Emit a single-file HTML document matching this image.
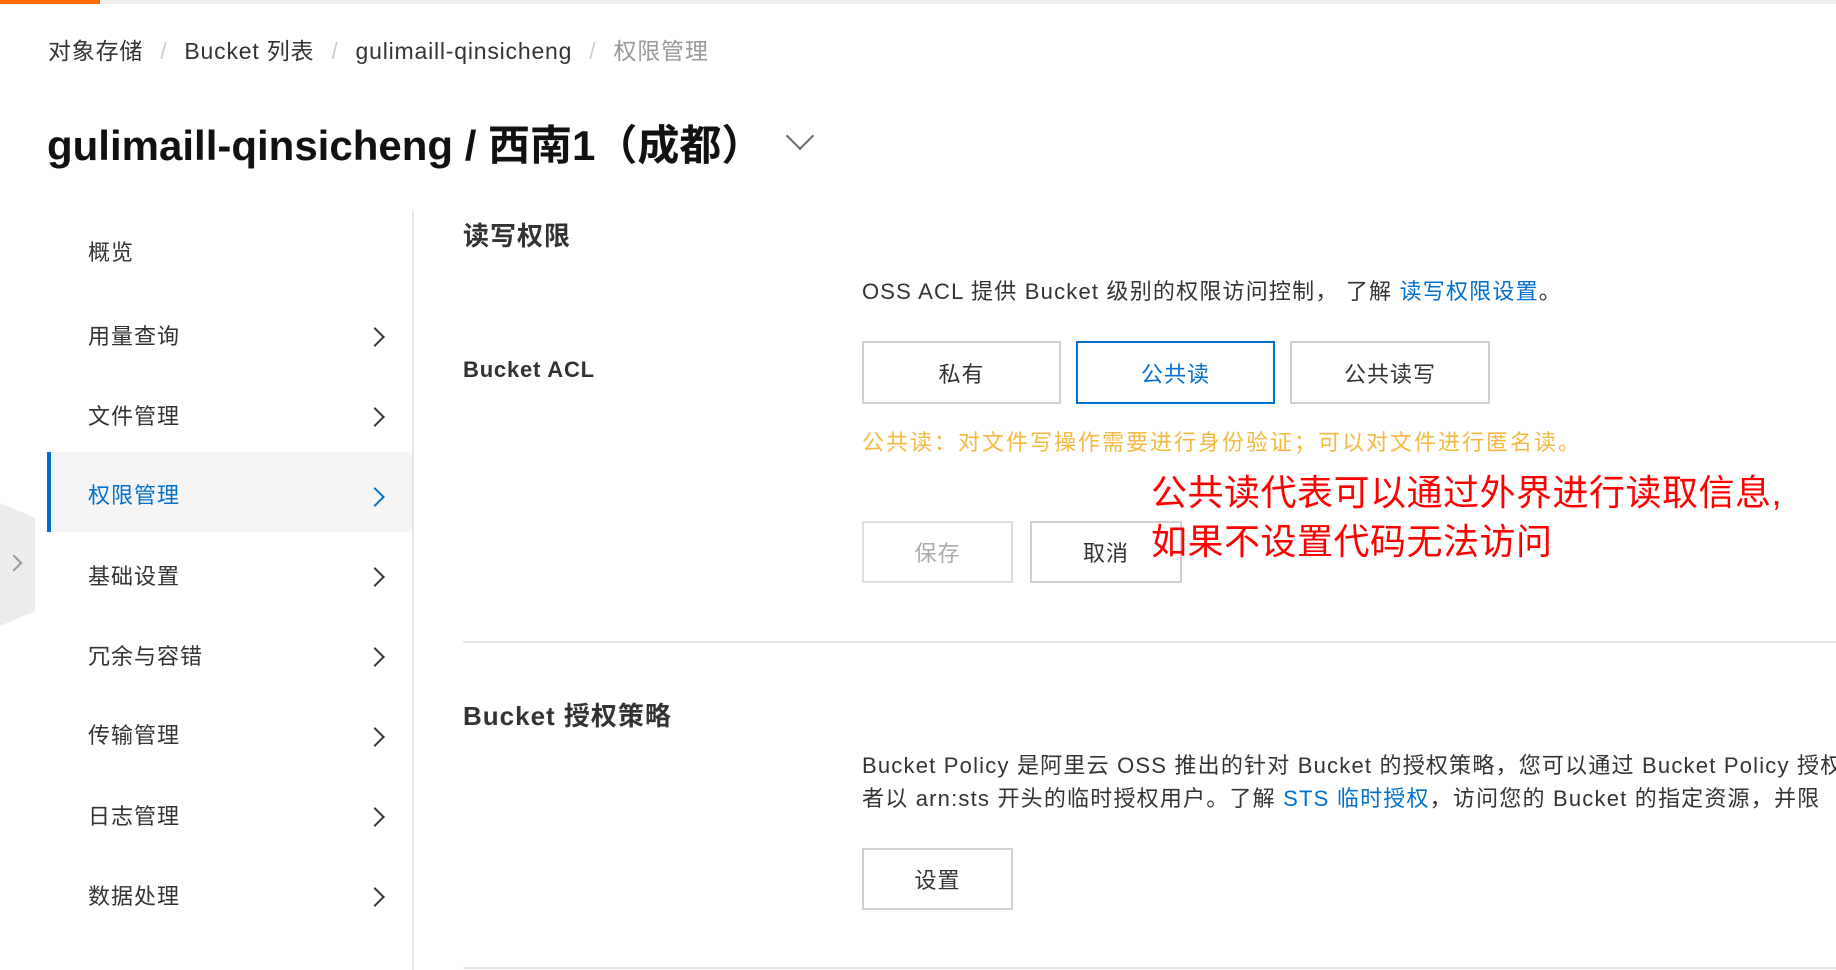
<!DOCTYPE html>
<html><head><meta charset="utf-8"><style>
*{margin:0;padding:0;box-sizing:border-box}
body{width:1836px;height:970px;overflow:hidden;background:#fff;font-family:"Liberation Sans","Noto Sans CJK SC",sans-serif;color:#333;position:relative}
.a{position:absolute;white-space:nowrap}
.bc{font-size:23px;top:32px;color:#333;letter-spacing:0.8px}
.bc .s{color:#ccc;margin:0 17px}
.menu{left:88px;font-size:22px;color:#333;line-height:30px;letter-spacing:1px}
.chev{position:absolute;left:368px;width:14px;height:14px;border-right:2.5px solid #333;border-top:2.5px solid #333;transform:rotate(45deg)}
.btn{position:absolute;border:2px solid #d0d0d0;font-size:22px;display:flex;align-items:center;justify-content:center;color:#333;background:#fff;letter-spacing:1px}
.t{letter-spacing:1.2px}
</style></head><body>
<div class="a" style="left:0;top:0;width:1836px;height:4px;background:#eee"></div>
<div class="a" style="left:0;top:0;width:100px;height:4px;background:#ff6a00"></div>
<div class="a bc" style="left:48px">对象存储<span class="s">/</span>Bucket 列表<span class="s">/</span>gulimaill-qinsicheng<span class="s">/</span><span style="color:#999">权限管理</span></div>
<div class="a" style="left:47px;top:112px;font-size:42px;font-weight:bold;color:#111">gulimaill-qinsicheng / 西南1（成都）</div>
<div class="a" style="left:790px;top:126px;width:20px;height:20px;border-right:2.5px solid #666;border-bottom:2.5px solid #666;transform:rotate(45deg)"></div>

<div class="a" style="left:412px;top:211px;width:2px;height:759px;background:#e5e5e5"></div>
<div class="a" style="left:47px;top:452px;width:365px;height:80px;background:#f5f5f5;border-left:4px solid #0070cc"></div>
<div class="a" style="left:0;top:503px;width:35px;height:123px;background:#ececec;clip-path:polygon(0 0,100% 12%,100% 88%,0 100%)"></div>
<div class="a" style="left:8px;top:557px;width:12px;height:12px;border-right:2px solid #999;border-top:2px solid #999;transform:rotate(45deg)"></div>

<div class="a menu" style="top:238px">概览</div>
<div class="a menu" style="top:322px">用量查询</div><div class="chev" style="top:330px"></div>
<div class="a menu" style="top:402px">文件管理</div><div class="chev" style="top:410px"></div>
<div class="a menu" style="top:481px;color:#0070cc">权限管理</div><div class="chev" style="top:490px;border-color:#0070cc"></div>
<div class="a menu" style="top:562px">基础设置</div><div class="chev" style="top:570px"></div>
<div class="a menu" style="top:642px">冗余与容错</div><div class="chev" style="top:650px"></div>
<div class="a menu" style="top:721px">传输管理</div><div class="chev" style="top:730px"></div>
<div class="a menu" style="top:802px">日志管理</div><div class="chev" style="top:810px"></div>
<div class="a menu" style="top:882px">数据处理</div><div class="chev" style="top:890px"></div>

<div class="a" style="left:463px;top:216px;font-size:26px;font-weight:bold;letter-spacing:1px">读写权限</div>
<div class="a t" style="left:862px;top:274px;font-size:22px">OSS ACL 提供 Bucket 级别的权限访问控制， 了解 <span style="color:#0070cc">读写权限设置</span>。</div>
<div class="a" style="left:463px;top:357px;font-size:22px;font-weight:bold;letter-spacing:0.8px">Bucket ACL</div>
<div class="btn" style="left:862px;top:341px;width:199px;height:63px">私有</div>
<div class="btn" style="left:1076px;top:341px;width:199px;height:63px;border-color:#0070cc;color:#0070cc">公共读</div>
<div class="btn" style="left:1290px;top:341px;width:200px;height:63px">公共读写</div>
<div class="a" style="left:862px;top:425px;font-size:22px;color:#f5b942;letter-spacing:2px">公共读：对文件写操作需要进行身份验证；可以对文件进行匿名读。</div>
<div class="btn" style="left:862px;top:521px;width:151px;height:62px;color:#aaa;border-color:#ddd">保存</div>
<div class="btn" style="left:1030px;top:521px;width:152px;height:62px">取消</div>
<div class="a" style="left:1151px;top:468px;font-size:36px;color:#f00;line-height:49px;letter-spacing:0.5px">公共读代表可以通过外界进行读取信息,<br>如果不设置代码无法访问</div>

<div class="a" style="left:463px;top:641px;width:1373px;height:2px;background:#e5e5e5"></div>
<div class="a" style="left:463px;top:696px;font-size:26px;font-weight:bold;letter-spacing:1px">Bucket 授权策略</div>
<div class="a t" style="left:862px;top:749px;font-size:22px;line-height:33px">Bucket Policy 是阿里云 OSS 推出的针对 Bucket 的授权策略，您可以通过 Bucket Policy 授权<br>者以 arn:sts 开头的临时授权用户。了解 <span style="color:#0070cc">STS 临时授权</span>，访问您的 Bucket 的指定资源，并限</div>
<div class="btn" style="left:862px;top:848px;width:151px;height:62px">设置</div>
<div class="a" style="left:463px;top:967px;width:1373px;height:2px;background:#e5e5e5"></div>
</body></html>
